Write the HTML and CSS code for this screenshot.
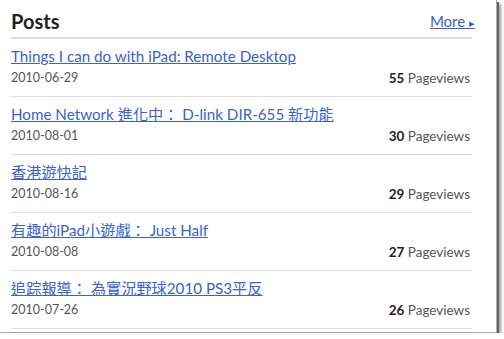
FILE: index.html
```html
<!DOCTYPE html>
<html lang="en">
<head>
    <meta charset="UTF-8">
    <title>Posts</title>
    <link rel="stylesheet" href="styles.css">
</head>
<body>
    <div class="frame">
        <div class="widget">
            <div class="widget-header">
                <h2>Posts</h2>
                <a class="more" href="#">More <span class="arrow">&#9656;</span></a>
            </div>
            <ul class="post-list">
                <li class="post">
                    <a class="post-title" href="#">Things I can do with iPad: Remote Desktop</a>
                    <div class="post-meta">
                        <span class="post-date">2010-06-29</span>
                        <span class="post-views"><b>55</b> Pageviews</span>
                    </div>
                </li>
                <li class="post">
                    <a class="post-title" href="#">Home Network 進化中： D-link DIR-655 新功能</a>
                    <div class="post-meta">
                        <span class="post-date">2010-08-01</span>
                        <span class="post-views"><b>30</b> Pageviews</span>
                    </div>
                </li>
                <li class="post">
                    <a class="post-title" href="#">香港遊快記</a>
                    <div class="post-meta">
                        <span class="post-date">2010-08-16</span>
                        <span class="post-views"><b>29</b> Pageviews</span>
                    </div>
                </li>
                <li class="post">
                    <a class="post-title" href="#">有趣的iPad小遊戲： Just Half</a>
                    <div class="post-meta">
                        <span class="post-date">2010-08-08</span>
                        <span class="post-views"><b>27</b> Pageviews</span>
                    </div>
                </li>
                <li class="post">
                    <a class="post-title" href="#">追踪報導： 為實況野球2010 PS3平反</a>
                    <div class="post-meta">
                        <span class="post-date">2010-07-26</span>
                        <span class="post-views"><b>26</b> Pageviews</span>
                    </div>
                </li>
            </ul>
        </div>
    </div>
</body>
</html>
```

FILE: styles.css
```css
body {
    margin: 0;
    padding: 0;
    background-color: #fff;
    font-family: Lato, "Noto Sans CJK TC", sans-serif;
    color: #555;
}

.frame {
    width: 497px;
    height: 333px;
    box-sizing: border-box;
    background-color: #fff;
    border-right: 1px solid #aaa;
    border-bottom: 1px solid #aaa;
    box-shadow: 2px 2px 0 #666, 4px 4px 3px #999;
    overflow: hidden;
}

.widget {
    padding: 0 24px 0 11px;
}

.widget-header {
    display: flex;
    justify-content: space-between;
    align-items: flex-start;
    height: 39px;
    box-sizing: border-box;
    padding-top: 9px;
    border-bottom: 2px solid #ddd;
}

.widget-header h2 {
    margin: 0;
    font-size: 20px;
    font-weight: bold;
    color: #222;
    line-height: 24px;
}

.more {
    margin: 3px -3px 0 0;
    font-size: 15px;
    color: #3a62d0;
    line-height: 18px;
}

.more .arrow {
    font-size: 11px;
}

.post-list {
    list-style: none;
    margin: 0;
    padding: 0;
}

.post {
    padding: 8px 0 8px;
    border-bottom: 1px solid #ddd;
}

.post-title {
    display: block;
    font-size: 15.2px;
    line-height: 19px;
    color: #3a62d0;
}

.post-meta {
    display: flex;
    justify-content: space-between;
    margin-top: 2px;
    line-height: 20px;
}

.post-date {
    font-size: 12.5px;
}

.post-views {
    padding-right: 2px;
    font-size: 13.5px;
}

.post-views b {
    color: #222;
}
```
